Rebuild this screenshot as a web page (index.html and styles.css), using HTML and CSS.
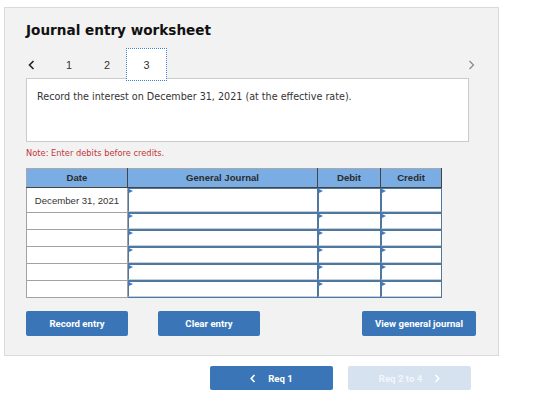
FILE: index.html
```html
<!DOCTYPE html>
<html lang="en">
<head>
<meta charset="utf-8">
<title>Journal entry worksheet</title>
<link rel="stylesheet" href="styles.css">
</head>
<body>
<div class="panel">
  <h1 class="title">Journal entry worksheet</h1>
  <div class="tabs">
    <span class="nav prev"><svg width="7" height="10" viewBox="0 0 7 10"><polyline points="5.5,1 1.5,5 5.5,9" fill="none" stroke="#222" stroke-width="1.6"/></svg></span>
    <span class="tab">1</span>
    <span class="tab">2</span>
    <span class="tab active">3</span>
    <span class="spacer"></span>
    <span class="nav next"><svg width="7" height="10" viewBox="0 0 7 10"><polyline points="1.5,1 5.5,5 1.5,9" fill="none" stroke="#888" stroke-width="1.2"/></svg></span>
  </div>
  <div class="instruction">Record the interest on December 31, 2021 (at the effective rate).</div>
  <p class="note">Note: Enter debits before credits.</p>
  <table class="journal">
    <colgroup><col class="c-date"><col class="c-gj"><col class="c-dr"><col class="c-cr"></colgroup>
    <thead>
      <tr><th>Date</th><th>General Journal</th><th>Debit</th><th>Credit</th></tr>
    </thead>
    <tbody>
      <tr class="first"><td class="date">December 31, 2021</td><td class="in"><div class="inp"></div></td><td class="in"><div class="inp"></div></td><td class="in"><div class="inp"></div></td></tr>
      <tr><td class="date"></td><td class="in"><div class="inp"></div></td><td class="in"><div class="inp"></div></td><td class="in"><div class="inp"></div></td></tr>
      <tr><td class="date"></td><td class="in"><div class="inp"></div></td><td class="in"><div class="inp"></div></td><td class="in"><div class="inp"></div></td></tr>
      <tr><td class="date"></td><td class="in"><div class="inp"></div></td><td class="in"><div class="inp"></div></td><td class="in"><div class="inp"></div></td></tr>
      <tr><td class="date"></td><td class="in"><div class="inp"></div></td><td class="in"><div class="inp"></div></td><td class="in"><div class="inp"></div></td></tr>
      <tr><td class="date"></td><td class="in"><div class="inp"></div></td><td class="in"><div class="inp"></div></td><td class="in"><div class="inp"></div></td></tr>
    </tbody>
  </table>
  <div class="actions">
    <button class="btn w-rec">Record entry</button>
    <button class="btn w-clr">Clear entry</button>
    <span class="spacer"></span>
    <button class="btn w-view">View general journal</button>
  </div>
</div>
<div class="reqs">
  <button class="btn req"><svg width="6" height="9" viewBox="0 0 6 9"><polyline points="4.5,1 1.2,4.5 4.5,8" fill="none" stroke="#fff" stroke-width="1.6"/></svg><span>Req 1</span></button>
  <button class="btn req disabled"><span>Req 2 to 4</span><svg width="6" height="9" viewBox="0 0 6 9"><polyline points="1.5,1 4.8,4.5 1.5,8" fill="none" stroke="#fff" stroke-width="1.6"/></svg></button>
</div>
</body>
</html>
```
FILE: styles.css
```css
html, body {
  margin: 0;
  padding: 0;
  background: #fff;
}
body {
  font-family: "Liberation Sans", Arial, sans-serif;
  color: #333;
}
.panel {
  margin: 7px 0 0 4px;
  height: 347px;
  border: 1px solid #dadada;
  background: #f2f2f2;
  padding: 0 21px;
  box-sizing: content-box;
  width: 451px;
}
.title {
  margin: 13px 0 0 0;
  font-family: "DejaVu Sans", Verdana, sans-serif;
  font-weight: bold;
  font-size: 13.6px;
  line-height: 18px;
  color: #111;
}
.tabs {
  display: flex;
  align-items: center;
  height: 33px;
  margin-top: 9px;
  margin-bottom: -3px;
  width: 449px;
}
.nav {
  display: flex;
  align-items: center;
}
.prev {
  width: 24px;
  padding-left: 2px;
  box-sizing: border-box;
}
.tab {
  width: 38px;
  height: 33px;
  display: flex;
  align-items: center;
  justify-content: center;
  font-size: 10.8px;
  color: #333;
  box-sizing: border-box;
}
.tab.active {
  width: 41px;
  background: #fff;
  border: 1px dotted #3b7fcf;
  position: relative;
  z-index: 1;
}
.spacer { flex: 1; }
.instruction {
  border: 1px solid #cbcbcb;
  background: #fff;
  font-family: "DejaVu Sans", Verdana, sans-serif;
  font-size: 9.6px;
  line-height: 12px;
  color: #333;
  padding: 12px 0 0 10px;
  box-sizing: border-box;
  width: 443px;
  height: 64px;
}
.note {
  margin: 6px 0 0 0;
  font-family: "DejaVu Sans", Verdana, sans-serif;
  font-size: 8.3px;
  line-height: 10px;
  color: #c4373b;
}
.journal {
  margin-top: 10px;
  border-collapse: collapse;
  table-layout: fixed;
  width: 415px;
  font-size: 9.6px;
  background: #fff;
}
.c-date { width: 101px; }
.c-gj { width: 190px; }
.c-dr { width: 63px; }
.c-cr { width: 61px; }
.journal th {
  background: #7aade3;
  color: #2b2b2b;
  font-weight: bold;
  height: 18px;
  padding: 0;
  border: 1px solid #444;
  border-top-color: #a9a9a9;
  text-align: center;
  line-height: 16px;
}
.journal th:first-child { border-left-color: #a9a9a9; }
.journal td {
  padding: 0;
  height: 16px;
}
.journal tr.first td { height: 24px; }
.journal td.date {
  border: 1px solid #a2a2a2;
  text-align: center;
  color: #333;
}
.journal td.in {
  border: 1px solid #50789f;
}
.inp {
  position: relative;
  height: 100%;
  box-sizing: border-box;
  border-top: 1px solid #50789f;
  border-left: 1px solid #50789f;
  border-bottom: 1px solid #c3cfdd;
}
.inp::before {
  content: "";
  position: absolute;
  left: 0;
  top: 0;
  border-left: 4px solid #3b7ccc;
  border-top: 2px solid transparent;
  border-bottom: 2px solid transparent;
}
.actions {
  display: flex;
  margin-top: 13px;
  width: 450px;
}
.btn {
  font-family: Roboto, "Liberation Sans", sans-serif;
  font-weight: bold;
  font-size: 9.6px;
  color: #fff;
  background: #3a76b7;
  border: 0;
  border-radius: 2px;
  height: 25px;
  padding: 0;
  display: inline-flex;
  align-items: center;
  justify-content: center;
}
.w-rec { width: 102px; }
.w-clr { width: 102px; margin-left: 30px; }
.w-view { width: 114px; }
.reqs {
  display: flex;
  margin: 10px 0 0 210px;
  gap: 15px;
}
.req {
  width: 123px;
  height: 24px;
  gap: 12px;
}
.req.disabled {
  background: #d6e2f0;
  color: #f2f6fb;
}
```
